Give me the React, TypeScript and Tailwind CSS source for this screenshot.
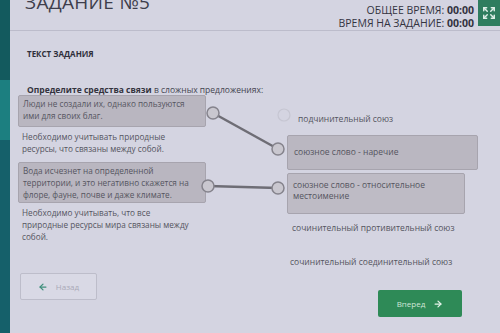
import React from "react";
import { Expand, ArrowLeft, ArrowRight } from "lucide-react";

const leftItems = [
  { text: ["Люди не создали их, однако пользуются", "ими для своих благ."], boxed: true, h: "h-[32px]", mt: "mt-[0px]" },
  { text: ["Необходимо учитывать природные", "ресурсы, что связаны между собой."], boxed: false, h: "h-[31px]", mt: "mt-[2px]" },
  { text: ["Вода исчезнет на определенной", "территории, и это негативно скажется на", "флоре, фауне, почве и даже климате."], boxed: true, h: "h-[41px]", mt: "mt-[2px]" },
  { text: ["Необходимо учитывать, что все", "природные ресурсы мира связаны между", "собой."], boxed: false, h: "h-[36px]", mt: "mt-[2px]" },
];

export default function App() {
  return (
    <div className="relative w-[500px] h-[333px] overflow-hidden flex bg-[#176a6c] font-['Open_Sans',_'Noto_Sans',_sans-serif]">
      <div className="w-[10px] flex flex-col">
        <div className="h-[80px] bg-[#135a5e]" />
        <div className="h-[60px] bg-[#1c7f80]" />
        <div className="flex-1 bg-[#15606a]" />
      </div>
      <div className="flex-1 bg-[#d4d4e1] flex flex-col">
        {/* header */}
        <div className="h-[31px] flex justify-between items-start border-b border-[#bcbccb]">
          <div className="ml-[15px] mt-[-7px] text-[19px] leading-none text-[#3e3e4c] tracking-[0.3px]">ЗАДАНИЕ №5</div>
          <div className="flex items-start">
            <div className="text-right text-[10.5px] leading-[13px] text-[#33333f] pt-[4px] pr-[4px]">
              <div>ОБЩЕЕ ВРЕМЯ: <b>00:00</b></div>
              <div>ВРЕМЯ НА ЗАДАНИЕ: <b>00:00</b></div>
            </div>
            <div className="w-[22px] h-[26px] bg-[#2f7d5f] flex items-center justify-center">
              <Expand size={14} color="#dfeee8" strokeWidth={2.5} />
            </div>
          </div>
        </div>

        <div className="pl-[17px] mt-[17px] text-[8px] font-bold text-[#2f2f3a]">ТЕКСТ ЗАДАНИЯ</div>
        <div className="pl-[17px] mt-[24px] text-[8.5px] leading-[11px] text-[#444450]">
          <b className="text-[#33333d]">Определите средства связи</b> в сложных предложениях:
        </div>

        {/* matching */}
        <div className="flex pl-[8px]">
          <div className="w-[188px] flex flex-col">
            {leftItems.map((it, i) => (
              <div
                key={i}
                className={`${it.h} ${it.mt} px-[4px] pt-[2px] text-[8.2px] leading-[12px] text-[#55555f] ${
                  it.boxed ? "bg-[#b9b6c0] border border-[#a7a4ae] rounded-[2px]" : ""
                }`}
              >
                {it.text.map((l, j) => (
                  <div key={j} className="whitespace-nowrap">{l}</div>
                ))}
              </div>
            ))}
          </div>
          <div className="w-[81px]" />
          <div className="w-[191px] flex flex-col text-[8.5px] text-[#55555f]">
            <div className="mt-[13px] h-[23px] flex items-center pl-[11px] whitespace-nowrap">подчинительный союз</div>
            <div className="mt-[4px] h-[35px] flex items-center px-[6px] bg-[#bab7c1] border border-[#a7a4ae] rounded-[2px] whitespace-nowrap">
              союзное слово - наречие
            </div>
            <div className="mt-[3px] h-[41px] pl-[5px] pt-[5px] leading-[11px] bg-[#bebbc5] border border-[#a7a4ae] rounded-[2px] mr-[13px]">
              <div>союзное слово - относительное</div>
              <div>местоимение</div>
            </div>
            <div className="mt-[3px] h-[22px] flex items-center pl-[5px] whitespace-nowrap">сочинительный противительный союз</div>
            <div className="mt-[12px] h-[22px] flex items-center pl-[3px] whitespace-nowrap">сочинительный соединительный союз</div>
          </div>
        </div>

        {/* buttons */}
        <div className="flex justify-between items-start pl-[10px] pr-[38px] mt-[0px]">
          <div className="w-[77px] h-[27px] border border-[#bdbdca] bg-[#d9d9e5] rounded-[2px] flex items-center justify-center gap-[8px] text-[8px] text-[#a9a9b8]">
            <ArrowLeft size={10} color="#3f8f7c" strokeWidth={3} />
            <span>Назад</span>
          </div>
          <div className="mt-[17px] w-[84px] h-[27px] bg-[#2e8a57] rounded-[2px] flex items-center justify-center gap-[8px] text-[8px] text-[#cfe6d8]">
            <span>Вперед</span>
            <ArrowRight size={10} color="#e5f3ea" strokeWidth={3} />
          </div>
        </div>
      </div>

      {/* connectors overlay */}
      <svg className="absolute left-0 top-0 pointer-events-none" width="500" height="333">
        <circle cx="284" cy="115" r="6" fill="none" stroke="#c6c6d2" strokeWidth="1.2" />
        <line x1="213" y1="113" x2="278" y2="149" stroke="#6e6d75" strokeWidth="2.5" />
        <line x1="208" y1="186" x2="278" y2="188" stroke="#6e6d75" strokeWidth="2.5" />
        <circle cx="213" cy="113" r="6" fill="#c9c7cf" stroke="#85838c" strokeWidth="1.5" />
        <circle cx="278" cy="149" r="6" fill="#c9c7cf" stroke="#85838c" strokeWidth="1.5" />
        <circle cx="208" cy="186" r="6" fill="#c9c7cf" stroke="#85838c" strokeWidth="1.5" />
        <circle cx="278" cy="188" r="6" fill="#c9c7cf" stroke="#85838c" strokeWidth="1.5" />
      </svg>
    </div>
  );
}
